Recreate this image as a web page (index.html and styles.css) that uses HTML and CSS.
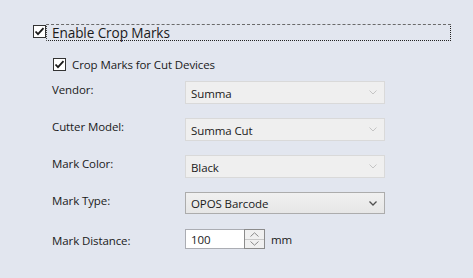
FILE: index.html
```html
<!DOCTYPE html>
<html>
<head>
<meta charset="utf-8">
<link rel="stylesheet" href="styles.css">
</head>
<body>
<div class="page">
  <div class="main-check">
    <span class="cb"><svg viewBox="0 0 13 13" width="13" height="13"><path d="M2.5 6.5 L5 9.2 L10.5 3.2" fill="none" stroke="#1a1a1a" stroke-width="1.8"/></svg></span>
    <span class="main-label">Enable Crop Marks</span>
  </div>
  <div class="section">
    <div class="sub-check">
      <span class="cb"><svg viewBox="0 0 13 13" width="13" height="13"><path d="M2.5 6.5 L5 9.2 L10.5 3.2" fill="none" stroke="#1a1a1a" stroke-width="1.8"/></svg></span>
      <span class="sub-label">Crop Marks for Cut Devices</span>
    </div>
    <div class="form">
      <div class="lbl">Vendor:</div>
      <div class="combo disabled"><span>Summa</span><svg class="chev" viewBox="0 0 8 5" width="8" height="5"><path d="M0.5 0.5 L4 4 L7.5 0.5" fill="none" stroke="#c4c4c4" stroke-width="1"/></svg></div>

      <div class="lbl">Cutter Model:</div>
      <div class="combo disabled"><span>Summa Cut</span><svg class="chev" viewBox="0 0 8 5" width="8" height="5"><path d="M0.5 0.5 L4 4 L7.5 0.5" fill="none" stroke="#c4c4c4" stroke-width="1"/></svg></div>

      <div class="lbl">Mark Color:</div>
      <div class="combo disabled"><span>Black</span><svg class="chev" viewBox="0 0 8 5" width="8" height="5"><path d="M0.5 0.5 L4 4 L7.5 0.5" fill="none" stroke="#c4c4c4" stroke-width="1"/></svg></div>

      <div class="lbl">Mark Type:</div>
      <div class="combo enabled"><span>OPOS Barcode</span><svg class="chev" viewBox="0 0 8 5" width="8" height="5"><path d="M0.5 0.5 L4 4 L7.5 0.5" fill="none" stroke="#505050" stroke-width="1.3"/></svg></div>

      <div class="lbl last">Mark Distance:</div>
      <div class="spin-row">
        <div class="spin">
          <div class="spin-text">100</div>
          <div class="spin-btns">
            <div class="sbtn"><svg viewBox="0 0 9 5" width="9" height="5"><path d="M0.5 4.5 L4.5 0.8 L8.5 4.5" fill="none" stroke="#8a8a8a" stroke-width="1"/></svg></div>
            <div class="sbtn"><svg viewBox="0 0 9 5" width="9" height="5"><path d="M0.5 0.5 L4.5 4.2 L8.5 0.5" fill="none" stroke="#8a8a8a" stroke-width="1"/></svg></div>
          </div>
        </div>
        <span class="unit">mm</span>
      </div>
    </div>
  </div>
</div>
</body>
</html>
```
FILE: styles.css
```css
html, body {
  margin: 0;
  padding: 0;
  background: #e2e6ef;
  width: 473px;
  height: 278px;
  overflow: hidden;
}
body {
  font-family: "Open Sans", "Noto Sans", "Liberation Sans", sans-serif;
  color: #1a1a1a;
}
.page {
  padding: 24px 0 0 33px;
}
.main-check {
  display: flex;
  align-items: flex-start;
}
.cb {
  display: block;
  width: 13px;
  height: 13px;
  box-sizing: border-box;
  border: 1px solid #333;
  background: #fff;
  position: relative;
  flex: none;
}
.cb svg {
  position: absolute;
  left: -1px;
  top: -1px;
}
.main-check .cb {
  margin-top: 1px;
}
.main-label {
  width: 405px;
  height: 17px;
  box-sizing: border-box;
  border-top: 1px dashed #6a6a6a;
  border-left: 1px dotted #444;
  border-right: 1px dotted #222;
  border-bottom: 1px dotted #222;
  font-size: 13.6px;
  line-height: 15px;
  padding-left: 5px;
  letter-spacing: -0.1px;
}
.section {
  padding-left: 20px;
  margin-top: 16px;
}
.sub-check {
  display: flex;
  align-items: center;
  height: 15px;
}
.sub-label {
  margin-left: 6px;
  font-size: 11.5px;
  letter-spacing: -0.1px;
}
.form {
  margin-top: 9px;
  margin-left: -1px;
  display: grid;
  grid-template-columns: 133px 200px;
  grid-auto-rows: 23px;
  row-gap: 14px;
  font-size: 11.5px;
  letter-spacing: -0.1px;
}
.lbl {
  padding-top: 2px;
  line-height: 14px;
}
.lbl.last {
  padding-top: 5px;
}
.combo {
  display: flex;
  align-items: center;
  justify-content: space-between;
  box-sizing: border-box;
  padding: 0 7px 0 5px;
}
.combo.disabled {
  background: #efefef;
  border: 1px solid #d9d9d9;
}
.combo.enabled {
  height: 22px;
  background: linear-gradient(#f0f0f0, #e6e6e6);
  border: 1px solid #acacac;
}
.combo span {
  padding-top: 1px;
}
.spin-row {
  display: flex;
  align-items: center;
  height: 20px;
}
.spin {
  display: flex;
  height: 20px;
}
.spin-text {
  width: 59px;
  height: 20px;
  box-sizing: border-box;
  background: #fff;
  border: 1px solid #abadb3;
  border-right: none;
  padding: 2px 0 0 5px;
}
.spin-btns {
  width: 21px;
  height: 20px;
  box-sizing: border-box;
  border: 1px solid #8b8b8b;
  display: flex;
  flex-direction: column;
  background: #f0f0f0;
}
.sbtn {
  flex: 1;
  display: flex;
  align-items: center;
  justify-content: center;
}
.sbtn + .sbtn {
  border-top: 1px solid #c8c8c8;
}
.unit {
  margin-left: 6px;
  padding-top: 1px;
}
```
